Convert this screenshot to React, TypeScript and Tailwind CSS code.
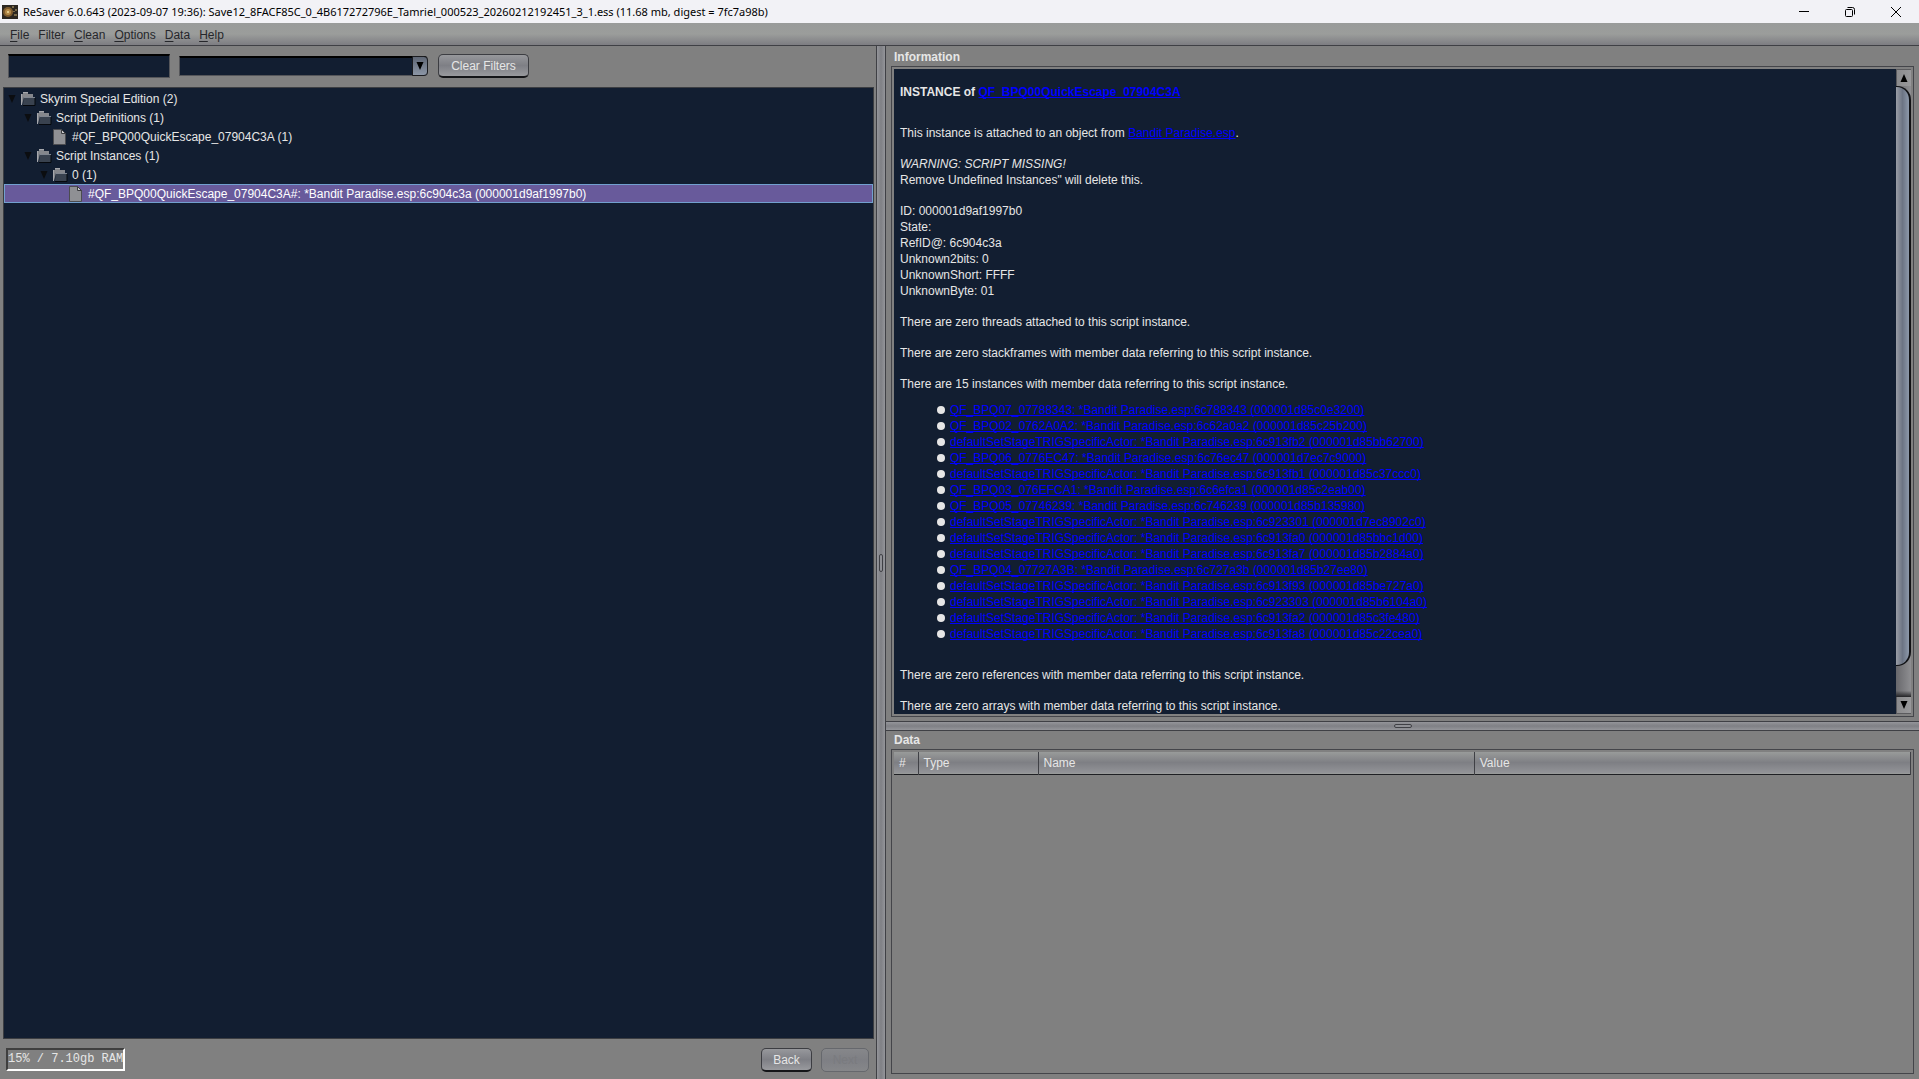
import React, { useState } from 'react'

const TITLE =
  'ReSaver 6.0.643 (2023-09-07 19:36): Save12_8FACF85C_0_4B617272796E_Tamriel_000523_20260212192451_3_1.ess (11.68 mb, digest = 7fc7a98b)'

const menus = ['File', 'Filter', 'Clean', 'Options', 'Data', 'Help']

type Node = { label: string; kind: 'folder' | 'file'; pad: string }

const nodes: Node[] = [
  { label: 'Skyrim Special Edition (2)', kind: 'folder', pad: 'pl-[3px]' },
  { label: 'Script Definitions (1)', kind: 'folder', pad: 'pl-[19px]' },
  { label: '#QF_BPQ00QuickEscape_07904C3A (1)', kind: 'file', pad: 'pl-[35px]' },
  { label: 'Script Instances (1)', kind: 'folder', pad: 'pl-[19px]' },
  { label: '0 (1)', kind: 'folder', pad: 'pl-[35px]' },
  {
    label: '#QF_BPQ00QuickEscape_07904C3A#: *Bandit Paradise.esp:6c904c3a (000001d9af1997b0)',
    kind: 'file',
    pad: 'pl-[51px]',
  },
]

const details = [
  'ID: 000001d9af1997b0',
  'State:',
  'RefID@: 6c904c3a',
  'Unknown2bits: 0',
  'UnknownShort: FFFF',
  'UnknownByte: 01',
]

const instances = [
  'QF_BPQ07_07788343: *Bandit Paradise.esp:6c788343 (000001d85c0e3200)',
  'QF_BPQ02_0762A0A2: *Bandit Paradise.esp:6c62a0a2 (000001d85c25b200)',
  'defaultSetStageTRIGSpecificActor: *Bandit Paradise.esp:6c913fb2 (000001d85bb62700)',
  'QF_BPQ06_0776EC47: *Bandit Paradise.esp:6c76ec47 (000001d7ec7c9000)',
  'defaultSetStageTRIGSpecificActor: *Bandit Paradise.esp:6c913fb1 (000001d85c37ccc0)',
  'QF_BPQ03_076EFCA1: *Bandit Paradise.esp:6c6efca1 (000001d85c2eab00)',
  'QF_BPQ05_07746239: *Bandit Paradise.esp:6c746239 (000001d85b135980)',
  'defaultSetStageTRIGSpecificActor: *Bandit Paradise.esp:6c923301 (000001d7ec8902c0)',
  'defaultSetStageTRIGSpecificActor: *Bandit Paradise.esp:6c913fa0 (000001d85bbc1d00)',
  'defaultSetStageTRIGSpecificActor: *Bandit Paradise.esp:6c913fa7 (000001d85b2884a0)',
  'QF_BPQ04_07727A3B: *Bandit Paradise.esp:6c727a3b (000001d85b27ee80)',
  'defaultSetStageTRIGSpecificActor: *Bandit Paradise.esp:6c913f93 (000001d85be727a0)',
  'defaultSetStageTRIGSpecificActor: *Bandit Paradise.esp:6c923303 (000001d85b6104a0)',
  'defaultSetStageTRIGSpecificActor: *Bandit Paradise.esp:6c913fa2 (000001d85c3fe480)',
  'defaultSetStageTRIGSpecificActor: *Bandit Paradise.esp:6c913fa8 (000001d85c22cea0)',
]

const buttonStyle =
  'h-6 rounded-[5px] border border-[#3c3d42] border-b-2 border-b-[#141518] bg-linear-to-b from-[#97989c] via-[#7e7f85] to-[#999a9e] pt-px text-[#e6e6e6]'

function AppIcon() {
  return (
    <svg width="16" height="14" viewBox="0 0 16 14" aria-hidden="true">
      <rect x="0" y="0" width="16" height="14" fill="#2b2620" />
      <path d="M10 1h2v2h-2zM13 4h2v2h-2zM10 6h3v1h-3zM12 9h3v2h-3z" fill="#7a6a48" />
      <circle cx="6" cy="7" r="5" fill="#7d5a2c" />
      <circle cx="6" cy="7" r="3" fill="#b58a48" />
      <circle cx="6" cy="7" r="1" fill="#f0dca0" />
    </svg>
  )
}

function FolderIcon() {
  return (
    <svg width="16" height="16" viewBox="0 0 16 16" aria-hidden="true">
      <path d="M1 14V3h2V1h5v2h5v3H4L2 14z" fill="#85878c" />
      <path d="M3 1h5v1H3z" fill="#a5a7ac" />
      <path d="M1.500 14V3" stroke="#a5a7ac" />
      <path d="M4 6h11v8H3z" fill="#39424f" />
      <path d="M4 6.500h11" stroke="#7f858f" />
      <path d="M3 14.500h12V7" stroke="#05080d" fill="none" />
    </svg>
  )
}

function FileIcon() {
  return (
    <svg width="16" height="16" viewBox="0 0 16 16" aria-hidden="true">
      <path d="M1.500.500h8l4 4v11h-12z" fill="#8f9094" stroke="#4b4c50" />
      <path d="M9.500.500v4h4z" fill="#c9cacd" stroke="#3c3d40" />
    </svg>
  )
}

function Arrow({ up = false, faint = false }: { up?: boolean; faint?: boolean }) {
  return (
    <svg width="8" height="8" viewBox="0 0 8 8" aria-hidden="true">
      <path d={up ? 'M4 0L7.500 8H.500z' : 'M.500 0h7L4 8z'} fill={faint ? '#0b0d10' : '#000'} />
    </svg>
  )
}

function TitleBar() {
  return (
    <header className="flex h-[23px] shrink-0 items-center bg-[#f2f2f6] pl-[2px] text-black">
      <AppIcon />
      <h1 className="ml-[5px] grow truncate font-['Noto_Sans','Open_Sans',sans-serif] text-[11px] leading-4">{TITLE}</h1>
      <button aria-label="Minimize" className="flex h-full w-[46px] items-center justify-center">
        <svg width="10" height="10" viewBox="0 0 10 10">
          <path d="M0 4.500h10" stroke="#000" />
        </svg>
      </button>
      <button aria-label="Restore" className="flex h-full w-[46px] items-center justify-center">
        <svg width="10" height="10" viewBox="0 0 10 10" fill="none" stroke="#000">
          <rect x="0.500" y="2.500" width="7" height="7" rx="1" />
          <path d="M2.500.500h5a2 2 0 0 1 2 2v5" />
        </svg>
      </button>
      <button aria-label="Close" className="flex h-full w-[46px] items-center justify-center">
        <svg width="10" height="10" viewBox="0 0 10 10">
          <path d="M0 0l10 10M10 0L0 10" stroke="#000" />
        </svg>
      </button>
    </header>
  )
}

function MenuBar() {
  return (
    <nav className="flex h-[23px] shrink-0 items-center gap-[9px] border-b border-[#3f4045] bg-linear-to-b from-[#999b9a] via-[#9b9d9b] to-[#7d7d82] pt-px pl-[10px] text-[#26272b]">
      {menus.map((menu) => (
        <button key={menu} className="leading-4">
          {menu === 'Filter' ? (
            menu
          ) : (
            <>
              <span className="underline underline-offset-2">{menu[0]}</span>
              {menu.slice(1)}
            </>
          )}
        </button>
      ))}
    </nav>
  )
}

function Tree() {
  const [selected, setSelected] = useState(5)

  return (
    <ul role="tree" className="min-h-0 grow border border-[#3c3e42] bg-[#121e31] pt-px text-[#e6e6e6]">
      {nodes.map((node, i) => (
        <li
          key={i}
          role="treeitem"
          aria-selected={i === selected}
          onClick={() => setSelected(i)}
          className={`flex h-[19px] items-center border ${node.pad} ${
            i === selected ? 'border-[#72a0cf] bg-[#685a9b] text-white' : 'border-transparent'
          }`}
        >
          <span className="flex w-3 shrink-0">{node.kind === 'folder' && <Arrow faint />}</span>
          {node.kind === 'folder' ? <FolderIcon /> : <FileIcon />}
          <span className="ml-1 leading-4 whitespace-nowrap">{node.label}</span>
        </li>
      ))}
    </ul>
  )
}

function LeftPane() {
  const [text, setText] = useState('')
  const [plugin, setPlugin] = useState('')

  const clearFilters = () => {
    setText('')
    setPlugin('')
  }

  return (
    <section className="flex min-w-0 flex-[871] flex-col pr-[2px] pl-[3px]">
      <div className="flex h-[41px] shrink-0 items-center pb-px pl-[5px]">
        <input
          aria-label="Filter text"
          value={text}
          onChange={(e) => setText(e.target.value)}
          className="h-6 w-[162px] border border-[#55565a] border-t-2 border-t-black bg-[#121e31] px-1 text-[#e6e6e6] outline-none"
        />
        <div className="relative ml-[9px] h-5 w-[249px]">
          <select
            aria-label="Plugin"
            value={plugin}
            onChange={(e) => setPlugin(e.target.value)}
            className="block h-5 w-full appearance-none rounded-r-[4px] border border-[#55565a] border-t-2 border-t-black bg-[#121e31] px-1 text-[#e6e6e6] outline-none"
          >
            <option value=""></option>
          </select>
          <span className="pointer-events-none absolute inset-y-0 right-0 flex w-4 items-center justify-center rounded-r-[4px] border border-[#1b1c20] bg-linear-to-b from-[#5f6775] to-[#8c96a6]">
            <Arrow />
          </span>
        </div>
        <button onClick={clearFilters} className={`${buttonStyle} ml-[10px] w-[91px]`}>
          Clear Filters
        </button>
      </div>
      <Tree />
      <footer className="flex h-10 shrink-0 items-center gap-[9px] pt-px pr-[5px] pl-[3px]">
        <div className="mr-auto h-[23px] border-2 border-t-[#3f3f3f] border-r-white border-b-white border-l-[#3f3f3f] font-['Liberation_Mono',monospace] leading-[18px] text-[#e6e6e6]">
          15% / 7.10gb RAM
        </div>
        <button className={`${buttonStyle} w-[51px]`}>Back</button>
        <button
          disabled
          className="h-6 w-12 rounded-[5px] border border-[#66686d] bg-linear-to-b from-[#86878a] via-[#7e7f84] to-[#86878a] text-[#7a7b7f]"
        >
          Next
        </button>
      </footer>
    </section>
  )
}

function ScrollBar() {
  return (
    <div className="flex w-[15px] shrink-0 flex-col bg-linear-to-r from-[#68686c] to-[#8f8f92]">
      <button
        aria-label="Scroll up"
        className="flex h-[17px] shrink-0 items-center justify-center border-t border-l border-[#5b5b5e] bg-linear-to-r from-[#8b8b8d] to-[#99999b]"
      >
        <Arrow up />
      </button>
      <div className="flex-[580] rounded-r-[14px] border-y border-r-2 border-[#101114] bg-linear-to-r from-[#9a9ea6] via-[#6c7484] to-[#8d99ab]" />
      <div className="flex-[31] bg-linear-to-b from-transparent from-80% to-[#232326]" />
      <button
        aria-label="Scroll down"
        className="flex h-[17px] shrink-0 items-center justify-center border-b border-l border-[#5b5b5e] bg-linear-to-r from-[#8b8b8d] to-[#99999b]"
      >
        <Arrow />
      </button>
    </div>
  )
}

function InfoLink({ children }: { children: React.ReactNode }) {
  return (
    <a
      href="#"
      className="text-[#0000ff] underline decoration-1 underline-offset-1 [text-decoration-skip-ink:none]"
    >
      {children}
    </a>
  )
}

function InformationPanel() {
  return (
    <section className="flex min-h-0 flex-[671] flex-col pr-[5px] pb-1 pl-[5px]">
      <h2 className="h-5 shrink-0 pl-[3px] leading-[22px] font-bold text-[#e6e6e6]">Information</h2>
      <div className="flex min-h-0 grow border border-[#44454a] p-[2px]">
        <article className="min-w-0 grow overflow-hidden bg-[#121e31] px-[6px] pt-[15px] leading-4 text-[#e6e6e6]">
          <h3 className="mb-[25px] font-bold">
            INSTANCE of <InfoLink>QF_BPQ00QuickEscape_07904C3A</InfoLink>
          </h3>
          <p className="mb-[15px]">
            This instance is attached to an object from <InfoLink>Bandit Paradise.esp</InfoLink>.
          </p>
          <p className="mb-[15px]">
            <em>WARNING: SCRIPT MISSING!</em>
            <br />
            Remove Undefined Instances&quot; will delete this.
          </p>
          <div className="mb-[15px]">
            {details.map((line) => (
              <p key={line}>{line}</p>
            ))}
          </div>
          <p className="mb-[15px]">There are zero threads attached to this script instance.</p>
          <p className="mb-[15px]">There are zero stackframes with member data referring to this script instance.</p>
          <p className="mb-[10px]">There are 15 instances with member data referring to this script instance.</p>
          <ul className="mb-[25px] pl-[37px]">
            {instances.map((name) => (
              <li key={name} className="flex items-center gap-[5px] whitespace-nowrap">
                <span className="size-2 rounded-full bg-[#e6e6e6]" />
                <InfoLink>{name}</InfoLink>
              </li>
            ))}
          </ul>
          <p className="mb-[15px]">There are zero references with member data referring to this script instance.</p>
          <p>There are zero arrays with member data referring to this script instance.</p>
        </article>
        <ScrollBar />
      </div>
    </section>
  )
}

function DataPanel() {
  return (
    <section className="flex min-h-0 flex-[343] flex-col pr-[5px] pb-[5px] pl-[5px]">
      <h2 className="h-[18px] shrink-0 pl-[3px] leading-[18px] font-bold text-[#e6e6e6]">Data</h2>
      <div className="min-h-0 grow border border-[#44454a] p-[2px]">
        <table className="w-full table-fixed border-collapse text-left text-[#e6e6e6]">
          <thead>
            <tr className="h-[22px] border-b border-[#1f2024] bg-linear-to-b from-[#999b9a] via-[#7e7f84] to-[#939498]">
              <th className="w-6 border-r border-[#3f4045] pl-[5px] font-normal">#</th>
              <th className="w-[120px] border-r border-[#3f4045] pl-[5px] font-normal">Type</th>
              <th className="border-r border-[#3f4045] pl-[5px] font-normal">Name</th>
              <th className="border-r border-[#3f4045] pl-[5px] font-normal">Value</th>
            </tr>
          </thead>
          <tbody />
        </table>
      </div>
    </section>
  )
}

export default function App() {
  return (
    <div className="flex h-screen flex-col overflow-hidden bg-[#808080] font-['Liberation_Sans',Arial,sans-serif] text-xs">
      <TitleBar />
      <MenuBar />
      <main className="flex min-h-0 grow">
        <LeftPane />
        {/* Vertical divider */}
        <div className="flex w-[10px] shrink-0 items-center justify-center border-x border-[#3f4045] bg-linear-to-r from-[#94959a] via-[#7f8085] to-[#94959a]">
          <div className="h-[18px] w-1 rounded-sm border border-[#3f4045] bg-[#8f9095]" />
        </div>
        <div className="flex min-w-0 flex-[1033] flex-col">
          <InformationPanel />
          {/* Horizontal divider */}
          <div className="flex h-[10px] shrink-0 items-center justify-center border-y border-[#3f4045] bg-linear-to-b from-[#94959a] via-[#7f8085] to-[#94959a]">
            <div className="h-1 w-[18px] rounded-sm border border-[#3f4045] bg-[#8f9095]" />
          </div>
          <DataPanel />
        </div>
      </main>
    </div>
  )
}
